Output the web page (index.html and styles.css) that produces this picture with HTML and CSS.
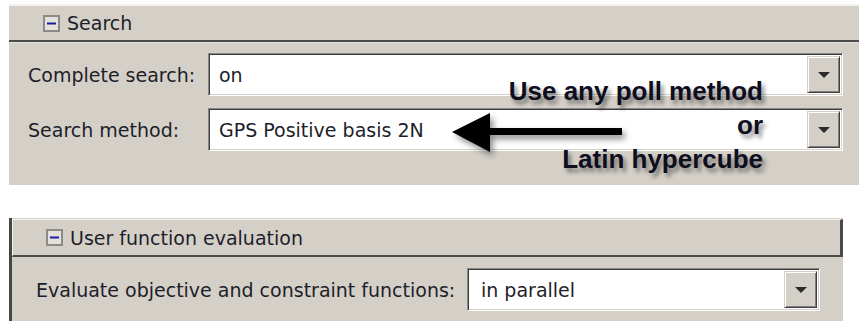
FILE: index.html
```html
<!DOCTYPE html>
<html lang="en">
<head>
    <meta charset="UTF-8">
    <title>Options</title>
    <link rel="stylesheet" href="styles.css">
</head>
<body>

<div class="panel search">
    <div class="panel-head">
        <span class="toggle"><svg width="17" height="17" viewBox="0 0 17 17"><rect x="1" y="1" width="15" height="15" fill="#e4e1da" stroke="#8c8a86" stroke-width="2"/><rect x="4" y="7.5" width="9" height="2" fill="#1c1ca8"/></svg></span>
        Search
    </div>
    <div class="panel-body form-grid">
        <label>Complete search:</label>
        <div class="combo"><span class="combo-value">on</span><span class="combo-btn"></span></div>
        <label>Search method:</label>
        <div class="combo"><span class="combo-value">GPS Positive basis 2N</span><span class="combo-btn"></span></div>
    </div>

    <div class="note">Use any poll method<br>or<br>Latin hypercube</div>
    <svg class="note-arrow" width="180" height="50" viewBox="0 0 180 50">
        <polygon points="4,24 42,5 42,20 174,20 174,27 42,27 42,44" fill="#000"/>
    </svg>
</div>

<div class="panel user-fn">
    <div class="panel-head">
        <span class="toggle"><svg width="17" height="17" viewBox="0 0 17 17"><rect x="1" y="1" width="15" height="15" fill="#e4e1da" stroke="#8c8a86" stroke-width="2"/><rect x="4" y="7.5" width="9" height="2" fill="#1c1ca8"/></svg></span>
        User function evaluation
    </div>
    <div class="panel-body eval-row">
        <label>Evaluate objective and constraint functions:</label>
        <div class="combo"><span class="combo-value">in parallel</span><span class="combo-btn"></span></div>
    </div>
</div>

</body>
</html>
```

FILE: styles.css
```css
body {
    margin: 0;
    background: #fff;
    font-family: "DejaVu Sans", Verdana, sans-serif;
    font-size: 19px;
    color: #1e1e2a;
    overflow: hidden;
}
.panel {
    background: #d4d0c8;
    margin-left: 9px;
}
.panel-head {
    display: flex;
    align-items: center;
    height: 34px;
    padding-left: 34px;
    background: #d4d0c8;
    border-top: 2px solid #f4f3f0;
    border-bottom: 2px solid #4a4a4a;
}
.toggle {
    display: flex;
    margin-right: 7px;
}

/* search panel */
.search {
    position: relative;
    margin-top: 4px;
}
.form-grid {
    display: grid;
    grid-template-columns: 180px 1fr;
    row-gap: 12px;
    align-items: center;
    padding: 10px 16px 34px 19px;
    border-top: 1px solid #e6e4de;
}

/* combo box, windows classic */
.combo {
    display: flex;
    align-items: stretch;
    height: 37px;
    background: #fff;
    border: 1px solid;
    border-color: #8a8884 #fff #fff #8a8884;
    box-shadow: inset 1px 1px #3c3c3c, inset -1px -1px #d4d0c8;
    padding: 2px;
}
.combo-value {
    flex: 1;
    display: flex;
    align-items: center;
    padding-left: 8px;
}
.combo-btn {
    width: 31px;
    position: relative;
    background: #d4d0c8;
    border: 1px solid;
    border-color: #d4d0c8 #404040 #404040 #d4d0c8;
    box-shadow: inset 1px 1px #fff, inset -1px -1px #808080;
}
.combo-btn::after {
    content: "";
    position: absolute;
    left: 50%;
    top: 50%;
    margin: -3px 0 0 -6px;
    border-left: 6px solid transparent;
    border-right: 6px solid transparent;
    border-top: 6px solid #2a2a2a;
}

/* annotation over the form */
.note {
    position: absolute;
    top: 70px;
    right: 96px;
    text-align: right;
    font-family: "Liberation Sans", Arial, sans-serif;
    font-weight: bold;
    font-size: 26px;
    line-height: 34px;
    color: #0e0e1e;
    text-shadow: 3px 4px 4px rgba(0, 0, 0, 0.45);
}
.note-arrow {
    position: absolute;
    left: 439px;
    top: 104px;
    filter: drop-shadow(3px 4px 3px rgba(0, 0, 0, 0.45));
}

/* user function panel */
.user-fn {
    width: 831px;
    margin-top: 33px;
    border-left: 3px solid #464646;
    padding-top: 1px;
}
.user-fn .panel-head {
    height: 35px;
    border-top: 1px solid #f4f3f0;
    border-left: 1px solid #f4f3f0;
    border-right: 3px solid #4a4a4a;
    border-bottom: 2px solid #4a4a4a;
    padding-left: 33px;
}
.eval-row {
    display: flex;
    align-items: center;
    padding: 11px 0 20px 24px;
}
.eval-row label {
    width: 431px;
}
.eval-row .combo {
    width: 347px;
}
.eval-row .combo-value {
    padding-left: 11px;
}
```
